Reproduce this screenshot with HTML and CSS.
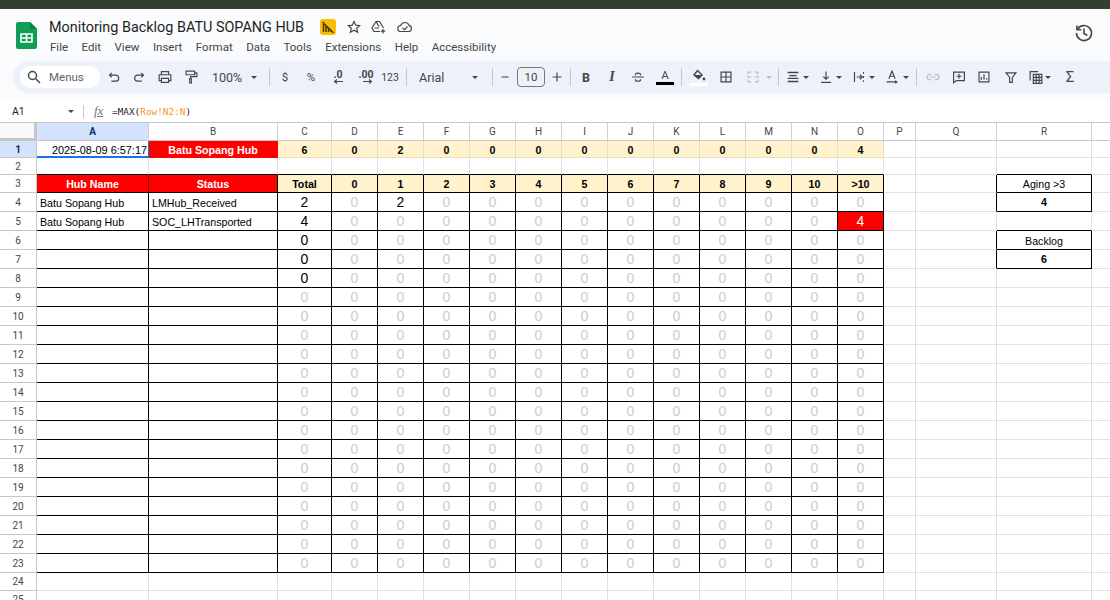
FILE: index.html
```html
<!DOCTYPE html>
<html lang="en">
<head>
<meta charset="utf-8">
<title>Monitoring Backlog BATU SOPANG HUB</title>
<link rel="stylesheet" href="styles.css">
</head>
<body>
<div class="strip"></div>
<header class="head">
  <svg class="logo" width="21" height="27" viewBox="0 0 21 27"><path d="M2 0h12l7 7v18a2 2 0 0 1-2 2H2a2 2 0 0 1-2-2V2a2 2 0 0 1 2-2z" fill="#0f9d58"/><path d="M14 0l7 7h-7z" fill="#0b7a43"/><path d="M5 12h11v8H5z" fill="none" stroke="#fff" stroke-width="1.6"/><path d="M5 16h11M10.500 12v8" stroke="#fff" stroke-width="1.600"/></svg>
  <div class="titles">
    <div class="titlerow">
      <span class="doc">Monitoring Backlog BATU SOPANG HUB</span>
      <span class="badge"><svg width="12" height="12" viewBox="0 0 12 12"><path d="M1.500 11V3M4 11V5M6.500 11V7.500M9 11V9M.5 1l11 11" fill="none" stroke="#4a3a00" stroke-width="1.500"/></svg></span>
      <svg class="star" width="14" height="14" viewBox="0 0 14 14"><path d="M7 1.500l1.700 3.700 4 .4-3 2.700.9 4L7 10.300l-3.600 2 .9-4-3-2.700 4-.4z" fill="none" stroke="#444746" stroke-width="1.200"/></svg>
      <svg class="drive" width="15" height="14" viewBox="0 0 15 14"><path d="M5 1.500h3.500l4 6.500M5 1.500L1 8l2 3.500h6M5 1.500L8 6.500M3.500 8H8" fill="none" stroke="#444746" stroke-width="1.200"/><path d="M12 9v4.500M9.800 11.200h4.500" stroke="#444746" stroke-width="1.200"/></svg>
      <svg class="cloud" width="16" height="12" viewBox="0 0 16 12"><path d="M4 10.500a3 3 0 0 1-.4-6A4.500 4.500 0 0 1 12 4.300a3.200 3.200 0 0 1 0 6.200z" fill="none" stroke="#444746" stroke-width="1.200"/><path d="M5.500 7l2 1.700L10.500 5.500" fill="none" stroke="#444746" stroke-width="1.100"/></svg>
    </div>
    <nav class="menu"><span>File</span><span>Edit</span><span>View</span><span>Insert</span><span>Format</span><span>Data</span><span>Tools</span><span>Extensions</span><span>Help</span><span>Accessibility</span></nav>
  </div>
  <svg class="history" width="20" height="20" viewBox="0 0 20 20"><path d="M3.400 6.500A7.500 7.500 0 1 1 2.500 10" fill="none" stroke="#444746" stroke-width="1.600"/><path d="M3 2.500v4.300h4.300" fill="none" stroke="#444746" stroke-width="1.600"/><path d="M10 5.500V10.500l3.300 2" fill="none" stroke="#444746" stroke-width="1.600"/></svg>
</header>
<div class="toolwrap">
<div class="toolbar">
  <div class="search"><svg width="14" height="14" viewBox="0 0 14 14"><circle cx="5.500" cy="5.500" r="4" fill="none" stroke="#444746" stroke-width="1.500"/><path d="M8.500 8.500l4.500 4.500" stroke="#444746" stroke-width="1.500"/></svg><span>Menus</span></div>
  <svg class="ic" viewBox="0 0 16 16"><path d="M5.500 3.500L3 6l2.500 2.500M3 6h7a3 3 0 0 1 0 6.500H5"/></svg>
  <svg class="ic" viewBox="0 0 16 16"><path d="M10.500 3.500L13 6l-2.500 2.500M13 6H6.500a3 3 0 0 0 0 6.500H11"/></svg>
  <svg class="ic" viewBox="0 0 16 16"><path d="M4 5V2h8v3M4 12H1.500V5.500h13V12H12M4 9.500h8V14H4z"/></svg>
  <svg class="ic" viewBox="0 0 16 16"><path d="M2.500 1.500h9.500v4H2.500zM12 3.500h2.500v4H7.500V10M6.500 10h2v4.500h-2z"/></svg>
  <span class="zoomv">100%</span>
  <span class="caret"></span>
  <span class="sep"></span>
  <span class="tx">$</span>
  <span class="tx">%</span>
  <span class="dec"><b>.0</b><svg width="10" height="5" viewBox="0 0 10 5"><path d="M10 2.500H2M4 .5L1.500 2.500 4 4.500" fill="none" stroke="#444746" stroke-width="1.100"/></svg></span>
  <span class="dec dec2"><b>.00</b><svg width="10" height="5" viewBox="0 0 10 5"><path d="M0 2.500h8M6 .5l2.500 2L6 4.500" fill="none" stroke="#444746" stroke-width="1.100"/></svg></span>
  <span class="tx t123">123</span>
  <span class="sep"></span>
  <span class="font">Arial</span>
  <span class="caret"></span>
  <span class="sep"></span>
  <svg class="ic" viewBox="0 0 16 16"><path d="M4 8h8"/></svg>
  <span class="size">10</span>
  <svg class="ic" viewBox="0 0 16 16"><path d="M3 8h10M8 3v10"/></svg>
  <span class="sep"></span>
  <span class="tx fb">B</span>
  <span class="tx fi">I</span>
  <svg class="ic" viewBox="0 0 16 16"><path d="M1.500 8h13M5 6C5 3 11 3 11 6M5 10.500C5 13.500 11 13.500 11 10.500"/></svg>
  <span class="colr"><span>A</span><i class="bar-k"></i></span>
  <span class="sep"></span>
  <span class="fill"><svg width="14" height="13" viewBox="0 0 14 13"><path d="M5.500 1.500l4.500 4.500-3.500 3.500L2 6z" fill="none" stroke="#444746" stroke-width="1.400"/><path d="M2 6h8L6.500 9.500z" fill="#444746"/><circle cx="12" cy="10" r="1.400" fill="#444746"/></svg><i class="bar-w"></i></span>
  <svg class="ic" viewBox="0 0 16 16"><path d="M2.500 2.500h11v11h-11zM8 2.500v11M2.500 8h11"/></svg>
  <svg class="ic off" viewBox="0 0 16 16"><path d="M2.500 5V2.500H6M10 2.500h3.500V5M2.500 11v2.500H6M10 13.500h3.500V11M2.500 7v2M13.500 7v2M3.500 8H6M12.500 8H10"/></svg>
  <span class="caret off"></span>
  <span class="sep"></span>
  <svg class="ic" viewBox="0 0 16 16"><path d="M2 3h12M4 6.500h8M2 9.500h12M2 13h12" stroke-width="1.500"/></svg>
  <span class="caret"></span>
  <svg class="ic" viewBox="0 0 16 16"><path d="M8 2v8.500M5 7.500l3 3 3-3M2.500 14h11"/></svg>
  <span class="caret"></span>
  <svg class="ic" viewBox="0 0 16 16"><path d="M3 2.500v11M13 2.500v2M13 7v2M13 11.500v2M5.500 8h6M9 5.500L11.500 8 9 10.500"/></svg>
  <span class="caret"></span>
  <svg class="ic" viewBox="0 0 16 16"><path d="M4.500 10L8 1.500 11.500 10M5.700 7.200h4.600M2 13.500h11M11.500 12l2 1.500-2 1.500"/></svg>
  <span class="caret"></span>
  <span class="sep"></span>
  <svg class="ic off" viewBox="0 0 16 16"><path d="M6 5H4.500a3 3 0 0 0 0 6H6M10 5h1.500a3 3 0 0 1 0 6H10M5 8h6"/></svg>
  <svg class="ic" viewBox="0 0 16 16"><path d="M2 2.500h12v9.500H5l-3 2.500zM8 4.500v5.500M5.200 7.200h5.600"/></svg>
  <svg class="ic" viewBox="0 0 16 16"><path d="M2.500 2.500h11v11h-11zM5 11V8M8 11V5M11 11V9.500"/></svg>
  <svg class="ic" viewBox="0 0 16 16"><path d="M2.500 3.500h11L9.500 8.500V14h-3V8.500z"/></svg>
  <svg class="ic" viewBox="0 0 16 16"><path d="M1.500 12V2h9M5 5h9.500v10H5zM5 8.500h9.500M5 11.800h9.500M8.200 5v10M11.400 5v10"/></svg>
  <span class="caret"></span>
  <span class="tx sigma">Σ</span>
</div>
</div>
<div class="fbar">
  <span class="ref">A1</span>
  <span class="caret"></span>
  <span class="sep"></span>
  <span class="fx">fx</span>
  <span class="formula">=MAX(<em>Row!N2:N</em>)</span>
</div>
<table class="sheet">
<colgroup><col class="c-r"><col class="c-a"><col class="c-b"><col class="c-c"><col class="c-d"><col class="c-d"><col class="c-d"><col class="c-d"><col class="c-d"><col class="c-d"><col class="c-d"><col class="c-d"><col class="c-d"><col class="c-d"><col class="c-d"><col class="c-d"><col class="c-p"><col class="c-q"><col class="c-s"><col class="c-t"></colgroup>
<tr class="hd"><th class="corner"></th><th class="on">A</th><th>B</th><th>C</th><th>D</th><th>E</th><th>F</th><th>G</th><th>H</th><th>I</th><th>J</th><th>K</th><th>L</th><th>M</th><th>N</th><th>O</th><th>P</th><th>Q</th><th>R</th><th></th></tr>
<tr class="r1"><th class="on">1</th><td class="sel">2025-08-09 6:57:17</td><td class="rt">Batu Sopang Hub</td><td class="ct">6</td><td class="ct">0</td><td class="ct">2</td><td class="ct">0</td><td class="ct">0</td><td class="ct">0</td><td class="ct">0</td><td class="ct">0</td><td class="ct">0</td><td class="ct">0</td><td class="ct">0</td><td class="ct">0</td><td class="ct">4</td><td></td><td></td><td></td><td></td></tr>
<tr class="r1"><th>2</th><td class="bb"></td><td class="bb"></td><td class="bb"></td><td class="bb"></td><td class="bb"></td><td class="bb"></td><td class="bb"></td><td class="bb"></td><td class="bb"></td><td class="bb"></td><td class="bb"></td><td class="bb"></td><td class="bb"></td><td class="bb"></td><td class="bb"></td><td></td><td></td><td class="bb"></td><td></td></tr>
<tr class="r3"><th>3</th><td class="rh rm">Hub Name</td><td class="rh">Status</td><td class="k ch">Total</td><td class="k ch">0</td><td class="k ch">1</td><td class="k ch">2</td><td class="k ch">3</td><td class="k ch">4</td><td class="k ch">5</td><td class="k ch">6</td><td class="k ch">7</td><td class="k ch">8</td><td class="k ch">9</td><td class="k ch">10</td><td class="k ch">&gt;10</td><td></td><td class="br"></td><td class="k bx">Aging &gt;3</td><td></td></tr>
<tr><th>4</th><td class="k tl">Batu Sopang Hub</td><td class="k tl">LMHub_Received</td><td class="k v">2</td><td class="k z">0</td><td class="k v">2</td><td class="k z">0</td><td class="k z">0</td><td class="k z">0</td><td class="k z">0</td><td class="k z">0</td><td class="k z">0</td><td class="k z">0</td><td class="k z">0</td><td class="k z">0</td><td class="k z">0</td><td></td><td class="br"></td><td class="k bv">4</td><td></td></tr>
<tr><th>5</th><td class="k tl">Batu Sopang Hub</td><td class="k tl">SOC_LHTransported</td><td class="k v">4</td><td class="k z">0</td><td class="k z">0</td><td class="k z">0</td><td class="k z">0</td><td class="k z">0</td><td class="k z">0</td><td class="k z">0</td><td class="k z">0</td><td class="k z">0</td><td class="k z">0</td><td class="k z">0</td><td class="k hot">4</td><td></td><td></td><td class="bb"></td><td></td></tr>
<tr><th>6</th><td class="k"></td><td class="k"></td><td class="k v">0</td><td class="k z">0</td><td class="k z">0</td><td class="k z">0</td><td class="k z">0</td><td class="k z">0</td><td class="k z">0</td><td class="k z">0</td><td class="k z">0</td><td class="k z">0</td><td class="k z">0</td><td class="k z">0</td><td class="k z">0</td><td></td><td class="br"></td><td class="k bx">Backlog</td><td></td></tr>
<tr><th>7</th><td class="k"></td><td class="k"></td><td class="k v">0</td><td class="k z">0</td><td class="k z">0</td><td class="k z">0</td><td class="k z">0</td><td class="k z">0</td><td class="k z">0</td><td class="k z">0</td><td class="k z">0</td><td class="k z">0</td><td class="k z">0</td><td class="k z">0</td><td class="k z">0</td><td></td><td class="br"></td><td class="k bv">6</td><td></td></tr>
<tr><th>8</th><td class="k"></td><td class="k"></td><td class="k v">0</td><td class="k z">0</td><td class="k z">0</td><td class="k z">0</td><td class="k z">0</td><td class="k z">0</td><td class="k z">0</td><td class="k z">0</td><td class="k z">0</td><td class="k z">0</td><td class="k z">0</td><td class="k z">0</td><td class="k z">0</td><td></td><td></td><td></td><td></td></tr>
<tr><th>9</th><td class="k"></td><td class="k"></td><td class="k z">0</td><td class="k z">0</td><td class="k z">0</td><td class="k z">0</td><td class="k z">0</td><td class="k z">0</td><td class="k z">0</td><td class="k z">0</td><td class="k z">0</td><td class="k z">0</td><td class="k z">0</td><td class="k z">0</td><td class="k z">0</td><td></td><td></td><td></td><td></td></tr>
<tr><th>10</th><td class="k"></td><td class="k"></td><td class="k z">0</td><td class="k z">0</td><td class="k z">0</td><td class="k z">0</td><td class="k z">0</td><td class="k z">0</td><td class="k z">0</td><td class="k z">0</td><td class="k z">0</td><td class="k z">0</td><td class="k z">0</td><td class="k z">0</td><td class="k z">0</td><td></td><td></td><td></td><td></td></tr>
<tr><th>11</th><td class="k"></td><td class="k"></td><td class="k z">0</td><td class="k z">0</td><td class="k z">0</td><td class="k z">0</td><td class="k z">0</td><td class="k z">0</td><td class="k z">0</td><td class="k z">0</td><td class="k z">0</td><td class="k z">0</td><td class="k z">0</td><td class="k z">0</td><td class="k z">0</td><td></td><td></td><td></td><td></td></tr>
<tr><th>12</th><td class="k"></td><td class="k"></td><td class="k z">0</td><td class="k z">0</td><td class="k z">0</td><td class="k z">0</td><td class="k z">0</td><td class="k z">0</td><td class="k z">0</td><td class="k z">0</td><td class="k z">0</td><td class="k z">0</td><td class="k z">0</td><td class="k z">0</td><td class="k z">0</td><td></td><td></td><td></td><td></td></tr>
<tr><th>13</th><td class="k"></td><td class="k"></td><td class="k z">0</td><td class="k z">0</td><td class="k z">0</td><td class="k z">0</td><td class="k z">0</td><td class="k z">0</td><td class="k z">0</td><td class="k z">0</td><td class="k z">0</td><td class="k z">0</td><td class="k z">0</td><td class="k z">0</td><td class="k z">0</td><td></td><td></td><td></td><td></td></tr>
<tr><th>14</th><td class="k"></td><td class="k"></td><td class="k z">0</td><td class="k z">0</td><td class="k z">0</td><td class="k z">0</td><td class="k z">0</td><td class="k z">0</td><td class="k z">0</td><td class="k z">0</td><td class="k z">0</td><td class="k z">0</td><td class="k z">0</td><td class="k z">0</td><td class="k z">0</td><td></td><td></td><td></td><td></td></tr>
<tr><th>15</th><td class="k"></td><td class="k"></td><td class="k z">0</td><td class="k z">0</td><td class="k z">0</td><td class="k z">0</td><td class="k z">0</td><td class="k z">0</td><td class="k z">0</td><td class="k z">0</td><td class="k z">0</td><td class="k z">0</td><td class="k z">0</td><td class="k z">0</td><td class="k z">0</td><td></td><td></td><td></td><td></td></tr>
<tr><th>16</th><td class="k"></td><td class="k"></td><td class="k z">0</td><td class="k z">0</td><td class="k z">0</td><td class="k z">0</td><td class="k z">0</td><td class="k z">0</td><td class="k z">0</td><td class="k z">0</td><td class="k z">0</td><td class="k z">0</td><td class="k z">0</td><td class="k z">0</td><td class="k z">0</td><td></td><td></td><td></td><td></td></tr>
<tr><th>17</th><td class="k"></td><td class="k"></td><td class="k z">0</td><td class="k z">0</td><td class="k z">0</td><td class="k z">0</td><td class="k z">0</td><td class="k z">0</td><td class="k z">0</td><td class="k z">0</td><td class="k z">0</td><td class="k z">0</td><td class="k z">0</td><td class="k z">0</td><td class="k z">0</td><td></td><td></td><td></td><td></td></tr>
<tr><th>18</th><td class="k"></td><td class="k"></td><td class="k z">0</td><td class="k z">0</td><td class="k z">0</td><td class="k z">0</td><td class="k z">0</td><td class="k z">0</td><td class="k z">0</td><td class="k z">0</td><td class="k z">0</td><td class="k z">0</td><td class="k z">0</td><td class="k z">0</td><td class="k z">0</td><td></td><td></td><td></td><td></td></tr>
<tr><th>19</th><td class="k"></td><td class="k"></td><td class="k z">0</td><td class="k z">0</td><td class="k z">0</td><td class="k z">0</td><td class="k z">0</td><td class="k z">0</td><td class="k z">0</td><td class="k z">0</td><td class="k z">0</td><td class="k z">0</td><td class="k z">0</td><td class="k z">0</td><td class="k z">0</td><td></td><td></td><td></td><td></td></tr>
<tr><th>20</th><td class="k"></td><td class="k"></td><td class="k z">0</td><td class="k z">0</td><td class="k z">0</td><td class="k z">0</td><td class="k z">0</td><td class="k z">0</td><td class="k z">0</td><td class="k z">0</td><td class="k z">0</td><td class="k z">0</td><td class="k z">0</td><td class="k z">0</td><td class="k z">0</td><td></td><td></td><td></td><td></td></tr>
<tr><th>21</th><td class="k"></td><td class="k"></td><td class="k z">0</td><td class="k z">0</td><td class="k z">0</td><td class="k z">0</td><td class="k z">0</td><td class="k z">0</td><td class="k z">0</td><td class="k z">0</td><td class="k z">0</td><td class="k z">0</td><td class="k z">0</td><td class="k z">0</td><td class="k z">0</td><td></td><td></td><td></td><td></td></tr>
<tr><th>22</th><td class="k"></td><td class="k"></td><td class="k z">0</td><td class="k z">0</td><td class="k z">0</td><td class="k z">0</td><td class="k z">0</td><td class="k z">0</td><td class="k z">0</td><td class="k z">0</td><td class="k z">0</td><td class="k z">0</td><td class="k z">0</td><td class="k z">0</td><td class="k z">0</td><td></td><td></td><td></td><td></td></tr>
<tr><th>23</th><td class="k"></td><td class="k"></td><td class="k z">0</td><td class="k z">0</td><td class="k z">0</td><td class="k z">0</td><td class="k z">0</td><td class="k z">0</td><td class="k z">0</td><td class="k z">0</td><td class="k z">0</td><td class="k z">0</td><td class="k z">0</td><td class="k z">0</td><td class="k z">0</td><td></td><td></td><td></td><td></td></tr>
<tr class="r24"><th>24</th><td></td><td></td><td></td><td></td><td></td><td></td><td></td><td></td><td></td><td></td><td></td><td></td><td></td><td></td><td></td><td></td><td></td><td></td><td></td></tr>
<tr class="r24"><th>25</th><td></td><td></td><td></td><td></td><td></td><td></td><td></td><td></td><td></td><td></td><td></td><td></td><td></td><td></td><td></td><td></td><td></td><td></td><td></td></tr>
</table>
</body>
</html>
```
FILE: styles.css
```css
* { box-sizing: border-box; }
html, body { margin: 0; height: 600px; overflow: hidden; background: #fff; }
body { width: 1110px; font-family: Roboto, "Liberation Sans", sans-serif; color: #1f1f1f; }

.strip { height: 9px; background: #33402f; }

.head { height: 52px; background: #f9fbfd; display: flex; align-items: flex-start; padding: 13px 16px 0 16px; position: relative; }
.logo { margin-right: 12px; }
.titles { display: flex; flex-direction: column; flex: 1; }
.titlerow { display: flex; align-items: center; height: 16px; margin-top: -3px; }
.doc { font-family: Roboto, sans-serif; font-size: 14.400px; width: 271px; white-space: nowrap; color: #1f1f1f; }
.badge { width: 16px; height: 16px; background: #fbbc04; border-radius: 3px; display: flex; align-items: center; justify-content: center; }
.star { margin-left: 11px; }
.drive { margin-left: 10px; }
.cloud { margin-left: 11px; }
.menu { display: flex; gap: 13.500px; font-size: 11.500px; color: #444746; margin-top: 5px; margin-left: 1px; }
.history { position: absolute; right: 16px; top: 14px; }

.toolwrap { height: 39px; background: #f9fbfd; padding: 0 0 0 13px; }
.toolbar { height: 32px; background: #edf2fa; border-radius: 16px 0 0 16px; padding-left: 7px; display: grid; align-items: center; justify-items: start;
  grid-template-columns: 86px 25px 26px 26px 29px 39px 18px 8px 26px 27px 28px 24px 24px 13px 53px 20px 5px 20px 32px 21px 8px 26px 26px 26px 25px 8px 29px 27px 21px 12px 7px 18px 15px 18px 15px 18px 15px 19px 13px 9px 26px 25px 27px 25px 17px 17px 16px; }

.search { width: 80px; height: 22px; background: #fff; border-radius: 11px; display: flex; align-items: center; padding-left: 7px; gap: 8px; font-size: 11.500px; color: #5f6368; }
.ic { width: 16px; height: 16px; fill: none; stroke: #444746; stroke-width: 1.300; transform: scale(.9); }
.ic.off { stroke: #b9bcc0; }
.caret { width: 0; height: 0; border-left: 3.500px solid transparent; border-right: 3.500px solid transparent; border-top: 3.500px solid #444746; }
.caret.off { border-top-color: #b9bcc0; }
.sep { width: 1px; height: 18px; background: #c7c7c7; }
.zoomv { font-size: 12.500px; color: #444746; }
.tx { width: 16px; text-align: center; font-size: 11.500px; color: #444746; }
.t123 { font-size: 10.500px; display: flex; justify-content: center; }
.fb { font-weight: 700; font-size: 12.500px; }
.fi { font-style: italic; font-weight: 700; font-size: 14px; font-family: "Liberation Serif", serif; }
.sigma { font-size: 15px; }
.dec { width: 16px; display: flex; flex-direction: column; align-items: center; line-height: 9px; }
.dec b { font-size: 10.500px; color: #444746; font-weight: 700; }
.dec2 svg { margin-left: 4px; }
.font { font-size: 12.500px; color: #444746; }
.size { width: 28px; height: 20px; border: 1px solid #747775; border-radius: 4px; text-align: center; font-size: 11.500px; line-height: 18px; color: #444746; }
.colr { width: 18px; display: flex; flex-direction: column; align-items: center; font-size: 11.500px; line-height: 12px; color: #444746; }
.bar-k { width: 18px; height: 3px; background: #000; display: block; margin-top: 1px; }
.fill { width: 19px; display: flex; flex-direction: column; align-items: center; }
.bar-w { width: 19px; height: 3px; background: #fff; display: block; margin-top: 1px; }

.fbar { height: 22px; background: #fff; display: flex; align-items: center; padding: 0 0 0 12px; }
.ref { width: 56px; font-size: 10.500px; color: #1f1f1f; }
.fbar .sep { margin-left: 9px; height: 13px; }
.fx { font-family: "Liberation Serif", serif; font-style: italic; font-size: 13px; color: #70757a; margin-left: 10px; width: 18px; text-decoration: underline; }
.formula { font-family: "DejaVu Sans Mono", monospace; font-size: 9.400px; color: #1f1f1f; }
.formula em { font-style: normal; color: #f7981d; }

.sheet { table-layout: fixed; width: 1110px; border-collapse: separate; border-spacing: 0; font-family: "Liberation Sans", Arial, sans-serif; }
.c-r { width: 37px; } .c-a { width: 112px; } .c-b { width: 129px; } .c-c { width: 54px; } .c-d { width: 46px; }
.c-p { width: 32px; } .c-q { width: 81px; } .c-s { width: 95px; } .c-t { width: 19px; }

.sheet th { font-weight: 400; font-size: 10px; color: #444746; background: #fff; border-right: 1px solid #c7c7c7; border-bottom: 1px solid #c7c7c7; padding: 0; height: 19px; text-align: center; font-family: Roboto, sans-serif; }
.sheet td { padding: 0; height: 19px; border-right: 1px solid #e1e1e1; border-bottom: 1px solid #e1e1e1; text-align: center; font-size: 10.670px; line-height: 1; overflow: hidden; white-space: nowrap; color: #000; }

.hd th { border-top: 1px solid #c7c7c7; height: 19px; border-right-color: #d0d0d0; }
.hd th.corner { background: #f8f9fa; border-right: 3px solid #c7c7c7; border-bottom: 3px solid #c7c7c7; }
.sheet th.on { background: #d3e3fd; font-weight: 700; color: #0b2e5c; }
.r1 td, .r1 th { height: 17px; }
.r1 td { padding-top: 2px; }
.r3 td, .r3 th { height: 18px; }
.r3 td { padding-top: 2px; }
.r24 td, .r24 th { height: 18px; }

.sheet td.sel { text-align: right; font-size: 10.900px; padding-right: 1px; border-right-color: #1a73e8; border-bottom-color: #1a73e8; box-shadow: inset 0 -1px 0 #1a73e8; }
.sheet td.rt { background: #f00; color: #fff; font-weight: 700; border-color: #f00; }
.sheet td.ct { background: #fff2cc; font-weight: 700; border-color: #eadfbd; }
.sheet td.bb { border-bottom-color: #000; }
.sheet td.k { border-right-color: #000; border-bottom-color: #000; }
.sheet td.br { border-right-color: #000; }
.sheet td.rh { background: #f00; color: #fff; font-weight: 700; border-right-color: #000; border-bottom-color: #000; }
.sheet td.rm { border-right-color: #8f0000; }
.sheet td.ch { background: #fff2cc; font-weight: 700; }
.sheet td.tl { text-align: left; padding: 3px 0 0 3px; }
.sheet td.v { font-size: 14px; }
.sheet td.z { font-size: 14px; color: #cccccc; }
.sheet td.hot { background: #f00; color: #fff; font-size: 14px; }
.sheet td.bx { padding-top: 2px; }
.sheet td.bv { font-weight: 700; }
```
